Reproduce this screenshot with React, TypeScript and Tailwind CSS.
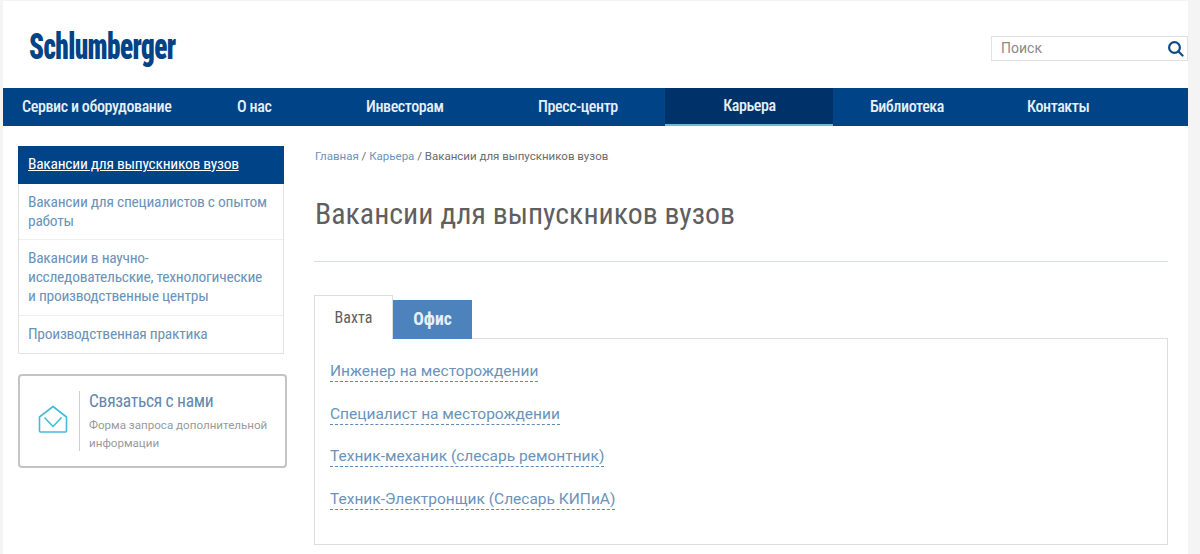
import React from "react";

const narrow = "font-['Liberation_Sans_Narrow','Roboto_Condensed','Liberation_Sans',sans-serif]";
const nav = [
  ["Сервис и оборудование", "w-[195px] pl-[19px]", false],
  ["О нас", "w-[90px] pl-[39px]", false],
  ["Инвесторам", "w-[185px] pl-[78px]", false],
  ["Пресс-центр", "w-[192px] pl-[65px]", false],
  ["Карьера", "w-[168px] justify-center pl-px", true],
  ["Библиотека", "w-[155px] pl-[37px]", false],
  ["Контакты", "w-[200px] pl-[39px]", false],
] as const;
const jobs = [
  "Инженер на месторождении",
  "Специалист на месторождении",
  "Техник-механик (слесарь ремонтник)",
  "Техник-Электронщик (Слесарь КИПиА)",
];

export default function App() {
  return (
    <div className={`h-[554px] w-[1200px] overflow-hidden bg-[#f4f4f4] pl-[3px] pr-[12px] pt-px ${narrow}`}>
      <div className="h-[553px] bg-white">
        <header className="flex h-[87px] items-center justify-between pl-[26px]">
          <div className="mt-[3px] origin-left scale-x-[0.735] text-[37px] font-black leading-none tracking-[-0.8px] text-[#004386]">Schlumberger</div>
          <div className="mt-[8px] flex h-[25px] w-[197px] items-center justify-between border border-[#e2e2e2] pl-[9px] pr-[3px] font-['Roboto',sans-serif] text-[14px] text-[#8a8a8a]">
            <span>Поиск</span>
            <svg width="17" height="17" viewBox="0 0 17 17" fill="none" stroke="#0f4a80" strokeWidth="2.2">
              <circle cx="7.5" cy="7.5" r="5.4" />
              <path d="M11.5 11.5L15.5 15.5" strokeLinecap="round" />
            </svg>
          </div>
        </header>
        <nav className="flex h-[38px] bg-[#004386] text-[16px] font-medium tracking-[-0.4px] text-[#e6f0f8]">
          {nav.map(([t, c, active]) => (
            <div
              key={t}
              className={`flex items-center ${c} ${active ? "border-b-2 border-[#6fb6df] bg-[#00326a]" : ""}`}
            >
              {t}
            </div>
          ))}
        </nav>
        <div className="flex items-start">
          <aside className="ml-[15px] mt-[20px] w-[269px] shrink-0">
            <ul className="w-[266px] whitespace-nowrap border border-[#e2e2e2] text-[15.5px] leading-[19px] tracking-[-0.26px] text-[#6b93ba]">
              <li className="-mx-px -mt-px bg-[#004386] px-[10px] pb-[10px] pt-[9px] text-white underline">Вакансии для выпускников вузов</li>
              <li className="border-b border-[#eeeeee] px-[9px] pb-[8px] pt-[9px]">Вакансии для специалистов с опытом<br />работы</li>
              <li className="border-b border-[#eeeeee] px-[9px] pb-[9px] pt-[9px]">Вакансии в научно-<br />исследовательские, технологические<br />и производственные центры</li>
              <li className="px-[9px] pb-[9px] pt-[9px]">Производственная практика</li>
            </ul>
            <div className="mt-[20px] flex h-[94px] w-[269px] items-center rounded-[4px] border-2 border-[#c4c4c4]">
              <div className="mb-[5px] flex w-[59px] justify-center pl-[7px]">
                <svg width="30" height="28" viewBox="0 0 30 28" fill="none" stroke="#43bcd6" strokeWidth="1.6" strokeLinejoin="round">
                  <path d="M1.5 12L15 1.5 28.5 12v14a1 1 0 0 1-1 1h-25a1 1 0 0 1-1-1z" />
                  <path d="M6.5 12.5l8.5 9 8.5-9" />
                </svg>
              </div>
              <div className="flex h-[60px] flex-col justify-center border-l border-[#cfcfcf] pl-[9px]">
                <div className="text-[17.5px] leading-[20px] tracking-[-0.3px] text-[#6388ad]">Связаться с нами</div>
                <div className="mt-[5px] font-['Roboto',sans-serif] text-[11.6px] leading-[18px] text-[#9a9a9a]">Форма запроса дополнительной<br />информации</div>
              </div>
            </div>
          </aside>
          <main className="ml-[27px] w-[854px] pt-[23px]">
            <div className="pl-px font-['Roboto',sans-serif] text-[11.5px] leading-[14px] text-[#6b6b6b]">
              <span className="text-[#6b93ba]">Главная</span> / <span className="text-[#6b93ba]">Карьера</span> / Вакансии для выпускников вузов
            </div>
            <h1 className="mt-[33px] border-b border-[#d5dfe8] pb-[29px] pl-px text-[29.8px] font-normal leading-[36px] text-[#5f5f5f]">Вакансии для выпускников вузов</h1>
            <div className="mt-[33px] flex h-[44px] items-end">
              <div className="flex h-[44px] w-[79px] items-center justify-center border border-b-0 border-[#dddddd] bg-white text-[16px] text-[#5f5f5f]">Вахта</div>
              <div className="flex h-[39px] w-[79px] items-center justify-center bg-[#4c83bd] text-[17.5px] font-bold text-[#e6f0f8]">Офис</div>
              <div className="h-px flex-1 bg-[#dddddd]" />
            </div>
            <div className="h-[206px] border border-t-0 border-[#dddddd] pl-[15px] pt-[22px] font-['Roboto',sans-serif] text-[15.5px] leading-[21px] text-[#6b93ba]">
              {jobs.map((j) => (
                <div key={j} className="mb-[21.7px]">
                  <span className="border-b border-dashed border-[#5f8ab5] pb-px">{j}</span>
                </div>
              ))}
            </div>
          </main>
        </div>
      </div>
    </div>
  );
}
